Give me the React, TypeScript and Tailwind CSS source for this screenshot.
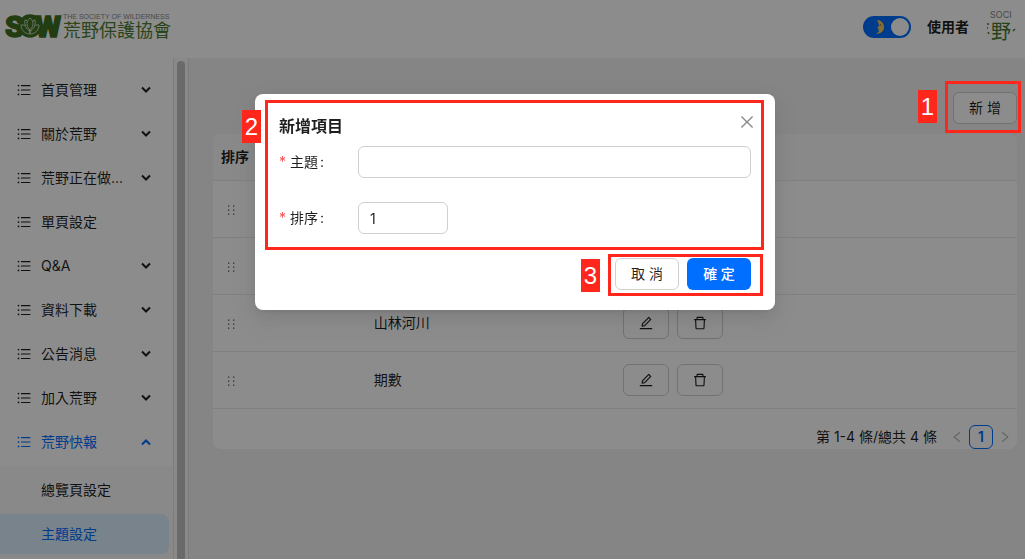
import React, { useState } from 'react';
import {
  AiOutlineClose,
  AiOutlineDelete,
  AiOutlineEdit,
  AiOutlineLeft,
  AiOutlineRight,
  AiOutlineUnorderedList,
} from 'react-icons/ai';

const MENU = [
  { label: '首頁管理', children: true },
  { label: '關於荒野', children: true },
  { label: '荒野正在做...', children: true },
  { label: '單頁設定', children: false },
  { label: 'Q&A', children: true },
  { label: '資料下載', children: true },
  { label: '公告消息', children: true },
  { label: '加入荒野', children: true },
  { label: '荒野快報', children: true, open: true },
];

const ROWS = ['荒野故事', '自然觀察', '山林河川', '期數'];

const Arrow: React.FC<{ up?: boolean }> = ({ up }) => (
  <svg className={`h-[10px] w-[10px] ${up ? 'rotate-180' : ''}`} viewBox="0 0 10 10" fill="none" stroke="currentColor" strokeWidth="2">
    <path d="M1 2.5l4 4 4-4" />
  </svg>
);

const Holder: React.FC = () => (
  <svg className="ml-[7px] h-[10px] w-[8px] opacity-75" viewBox="0 0 8 10" fill="currentColor">
    {[0.5, 4.5, 8.5].map(y => (
      <g key={y}>
        <rect x="0" y={y} width="1.3" height="1.3" />
        <rect x="5" y={y} width="1.3" height="1.3" />
      </g>
    ))}
  </svg>
);

const Logo: React.FC = () => (
  <svg className="h-[28px] w-[170px] overflow-visible" viewBox="0 0 170 28" aria-label="SOW 荒野保護協會">
    <g fill="#3f7022" stroke="#3f7022" strokeWidth="1.5">
      <text x="0" y="24" fontFamily="Roboto, sans-serif" fontWeight="900" fontSize="30">S</text>
      <text x="30" y="24" fontFamily="Roboto, sans-serif" fontWeight="900" fontSize="30">W</text>
      <circle cx="25" cy="13" r="11" />
    </g>
    <g fill="#3f7022" stroke="#c9dcbc" strokeWidth="0.9" strokeLinejoin="round">
      <path d="M25 21c-5 0-9-4-9-9 4-1 8 3 9 9z" />
      <path d="M25 21c5 0 9-4 9-9-4-1-8 3-9 9z" />
      <path d="M25 18c-4-2-6-6-5-11 3 0 5 4 5 11z" />
      <path d="M25 18c4-2 6-6 5-11-3 0-5 4-5 11z" />
      <path d="M25 17c-4-4-4-9 0-12 4 3 4 8 0 12z" />
    </g>
    <text x="58" y="6" fill="#888" fontFamily="'Liberation Sans', sans-serif" fontSize="7">THE SOCIETY OF WILDERNESS</text>
    <text x="58" y="24" fill="#4f7d33" fontFamily="'Noto Sans CJK TC', sans-serif" fontSize="18">荒野保護協會</text>
  </svg>
);

const Mark: React.FC<{ n: number; className: string }> = ({ n, className }) => (
  <span className={`absolute z-50 flex h-[33px] w-[19px] items-center justify-center bg-[#ff261c] font-['Liberation_Sans',sans-serif] text-[24px] leading-none text-white ${className}`}>
    {n}
  </span>
);

const Frame: React.FC<{ className: string }> = ({ className }) => (
  <span className={`pointer-events-none absolute z-50 border-3 border-[#ff261c] ${className}`}></span>
);

const App: React.FC = () => {
  const [topic, setTopic] = useState('');
  const [order, setOrder] = useState('1');

  return (
    <div className="flex h-screen flex-col overflow-hidden bg-[#f3f3f3] font-[Inter,'Noto_Sans_CJK_TC',sans-serif] text-sm text-black/88">
      <header className="flex h-[58px] shrink-0 items-center justify-between bg-white pl-[5px] pr-2">
        <a href="#" className="pb-1"><Logo /></a>
        <div className="flex items-center gap-4 pb-1">
          <button role="switch" aria-checked="true" aria-label="深色模式" className="flex h-[22px] w-12 items-center justify-between rounded-full bg-[#006eff] pl-3 pr-[2px]">
            <svg className="h-[14px] w-[10px]" viewBox="0 0 10 14">
              <path d="M2 0c4 0 7 3 7 7s-3 7-8 7c1-1 3-2 3-3l-1-1 1-1-2-1 2-2c0-2-1-4-2-6z" fill="#f5c65a" />
              <circle cx="5.5" cy="5" r="0.8" fill="#8a6420" />
            </svg>
            <span className="h-[18px] w-[18px] rounded-full bg-white"></span>
          </button>
          <span className="font-semibold">使用者</span>
          <svg className="h-8 w-8 overflow-visible" viewBox="0 0 32 32" aria-hidden="true">
            <text x="5" y="7" fill="#888" fontFamily="Inter, sans-serif" fontSize="9">SOCI</text>
            <text x="6" y="28" fill="#4a7a2c" fontFamily="'Noto Sans CJK TC', sans-serif" fontSize="20">野</text>
            <path d="M2 13h2M2 17h1M3 21l1 2M28 20l2-2" stroke="#4a7a2c" strokeWidth="1.5" />
          </svg>
        </div>
      </header>

      <div className="flex min-h-0 flex-1">
        <nav className="w-[174px] shrink-0 overflow-hidden border-r border-[#e4e4e4] bg-white pt-3">
          <ul>
            {MENU.map(item => (
              <li key={item.label} className="pb-1">
                <a href="#" className={`flex h-10 items-center pl-4 pr-[22px] ${item.open ? 'text-[#006eff]' : ''}`}>
                  <AiOutlineUnorderedList className="mr-[9px] h-4 w-4" />
                  <span className="flex-1">{item.label}</span>
                  {item.children && <Arrow up={item.open} />}
                </a>
              </li>
            ))}
          </ul>
          <ul className="bg-[#fafafa] py-1">
            <li><a href="#" className="flex h-10 items-center pl-[41px]">總覽頁設定</a></li>
            <li className="mt-1 pr-1"><a href="#" className="flex h-10 items-center rounded-r-lg bg-[#dceefe] pl-[41px] text-[#006eff]">主題設定</a></li>
          </ul>
        </nav>
        {/* scrollbar of the side menu */}
        <div className="w-[15px] shrink-0 border-r border-[#e0e0e0] bg-[#fafafa] px-[3px] pt-[3px]">
          <div className="h-full rounded-t-full bg-[#c1c1c1]"></div>
        </div>

        <main className="min-w-0 flex-1 pl-6 pr-2 pt-[34px]">
          <div className="flex justify-end">
            <div className="relative">
              <button className="h-8 w-16 rounded-md border border-[#d0d0d0] bg-white">新 增</button>
              <Frame className="-bottom-[9px] -left-2 -right-1 -top-[11px]" />
              <Mark n={1} className="-left-[35px] -top-[2px]" />
            </div>
          </div>

          <div className="mt-[10px] rounded-lg bg-white">
            <table className="w-full table-fixed">
              <thead>
                <tr className="h-[46px] border-b border-[#eaeaea] text-left">
                  <th className="w-[19%] rounded-tl-lg bg-[#fafafa] pl-2 font-semibold">排序</th>
                  <th className="w-[31%] bg-[#fafafa] pl-2 font-semibold">主題</th>
                  <th className="rounded-tr-lg bg-[#fafafa] pl-2 font-semibold">操作</th>
                </tr>
              </thead>
              <tbody>
                {ROWS.map(row => (
                  <tr key={row} className="h-[57px] border-b border-[#eaeaea]">
                    <td className="pl-2 pt-[2px]"><Holder /></td>
                    <td className="pl-2">{row}</td>
                    <td className="pl-2">
                      <div className="flex gap-2">
                        <button aria-label="編輯" className="flex h-8 w-[46px] items-center justify-center rounded-md border border-[#d0d0d0]"><AiOutlineEdit className="h-4 w-4" /></button>
                        <button aria-label="刪除" className="flex h-8 w-[46px] items-center justify-center rounded-md border border-[#d0d0d0]"><AiOutlineDelete className="h-4 w-4" /></button>
                      </div>
                    </td>
                  </tr>
                ))}
              </tbody>
            </table>
            <div className="flex items-center justify-end pt-4">
              <span className="mr-2">第 1-4 條/總共 4 條</span>
              <button aria-label="上一頁" className="flex h-6 w-6 items-center justify-center text-black/30"><AiOutlineLeft className="h-[14px] w-[14px]" /></button>
              <button className="h-6 w-6 rounded-md border border-[#006eff] font-semibold text-[#006eff]">1</button>
              <button aria-label="下一頁" className="flex h-6 w-6 items-center justify-center text-black/30"><AiOutlineRight className="h-[14px] w-[14px]" /></button>
            </div>
          </div>
        </main>
      </div>

      <div className="fixed inset-0 z-40 bg-black/45"></div>
      <div className="fixed inset-0 z-40 flex items-start justify-center pl-[5px] pt-[94px]">
        <div role="dialog" aria-labelledby="dialog-title" className="relative w-[520px] rounded-lg bg-white px-6 py-5 shadow-[0_6px_16px_0_rgba(0,0,0,0.08),0_3px_6px_-4px_rgba(0,0,0,0.12),0_9px_28px_8px_rgba(0,0,0,0.05)]">
          <div className="mb-2 flex h-6 items-start justify-between">
            <h2 id="dialog-title" className="text-base leading-6 font-semibold">新增項目</h2>
            <button aria-label="關閉" className="-mr-[5px] flex h-4 items-center text-black/45"><AiOutlineClose className="h-[18px] w-[18px]" /></button>
          </div>
          <form>
            <div className="flex items-center">
              <label htmlFor="topic" className="flex w-[79px]"><span className="mr-1 text-[#ff4d4f]">*</span>主題<span className="ml-[2px]">:</span></label>
              <input id="topic" value={topic} onChange={e => setTopic(e.target.value)} className="h-8 flex-1 rounded-md border border-[#d0d0d0] px-[11px] outline-none" />
            </div>
            <div className="mt-6 flex items-center">
              <label htmlFor="order" className="flex w-[79px]"><span className="mr-1 text-[#ff4d4f]">*</span>排序<span className="ml-[2px]">:</span></label>
              <input id="order" value={order} onChange={e => setOrder(e.target.value)} className="h-8 w-[90px] rounded-md border border-[#d0d0d0] px-[11px] outline-none" />
            </div>
            <div className="mt-6 flex justify-end gap-2">
              <button type="button" className="h-8 w-16 rounded-md border border-[#d0d0d0] bg-white">取 消</button>
              <button type="button" className="h-8 w-16 rounded-md bg-[#006eff] font-medium text-white">確 定</button>
            </div>
          </form>
          <Frame className="left-[10px] right-[11px] top-[6px] h-[150px]" />
          <Mark n={2} className="-left-[13px] top-4" />
          <Frame className="right-3 top-40 h-[42px] w-[155px]" />
          <Mark n={3} className="right-[175px] top-[165px]" />
        </div>
      </div>
    </div>
  );
};

export default App;
